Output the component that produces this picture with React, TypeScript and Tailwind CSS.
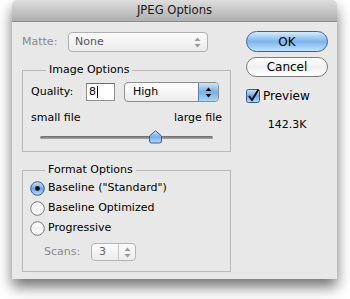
import React from "react";

const font = { fontFamily: '"DejaVu Sans", "Noto Sans", sans-serif' };

function Arrows({ color = "#8a8a8a" }: { color?: string }) {
  return (
    <svg width="7" height="11" viewBox="0 0 7 11">
      <path d="M3.5 0.5 L6.5 4 L0.5 4 Z" fill={color} />
      <path d="M3.5 10.5 L6.5 7 L0.5 7 Z" fill={color} />
    </svg>
  );
}

function Radio({ checked }: { checked?: boolean }) {
  return checked ? (
    <svg width="15" height="15" viewBox="0 0 15 15">
      <defs>
        <linearGradient id="rb" x1="0" y1="0" x2="0" y2="1">
          <stop offset="0" stopColor="#cfe4f8" />
          <stop offset="0.5" stopColor="#6fa7e3" />
          <stop offset="1" stopColor="#b5dcfb" />
        </linearGradient>
      </defs>
      <circle cx="7.5" cy="7.5" r="6.8" fill="url(#rb)" stroke="#3b5b8c" strokeWidth="1" />
      <circle cx="7.5" cy="7.5" r="2.4" fill="#111" />
    </svg>
  ) : (
    <svg width="15" height="15" viewBox="0 0 15 15">
      <defs>
        <linearGradient id="rw" x1="0" y1="0" x2="0" y2="1">
          <stop offset="0" stopColor="#ffffff" />
          <stop offset="0.5" stopColor="#f2f2f2" />
          <stop offset="1" stopColor="#ffffff" />
        </linearGradient>
      </defs>
      <circle cx="7.5" cy="7.5" r="6.8" fill="url(#rw)" stroke="#7a7a7a" strokeWidth="1" />
    </svg>
  );
}

export default function App() {
  return (
    <div className="w-[350px] h-[299px] bg-white pl-[12px] text-[11px] text-black" style={font}>
      <div className="w-[325px] h-[279px] rounded-t-[5px] shadow-[0_8px_14px_rgba(0,0,0,0.55)] flex flex-col overflow-hidden">
        <div className="h-[22px] shrink-0 bg-gradient-to-b from-[#dedede] to-[#afafaf] border-b border-[#8c8c8c] flex items-center justify-center text-[11.6px] text-[#1a1a1a]">
          JPEG Options
        </div>
        <div className="flex-1 bg-[#e8e8e8] flex pl-[10px]">
          {/* left column */}
          <div className="w-[209px] pt-[10px] flex flex-col">
            <div className="h-[20px] flex items-center">
              <span className="w-[46px] text-[#8a8a8a]">Matte:</span>
              <div className="w-[140px] h-[20px] rounded-[4px] border border-[#b0b0b0] bg-gradient-to-b from-[#fbfbfb] to-[#ececec] flex items-center pl-[6px] pr-[6px] justify-between">
                <span className="text-[#555]">None</span>
                <Arrows color="#9a9a9a" />
              </div>
            </div>

            <fieldset className="mt-[11px] border border-[#b9b9b9] pl-[8px] pr-[8px] h-[89px]">
              <legend className="ml-[15px] px-[3px] leading-[14px]">Image Options</legend>
              <div className="mt-[5px] h-[20px] flex items-center">
                <span className="w-[55px]">Quality:</span>
                <div className="w-[29px] h-[18px] bg-white border border-[#8f8f8f] border-t-[#6c6c6c] flex items-center pl-[2px]">
                  <span>8</span>
                  <span className="w-px h-[12px] bg-black ml-[1px]" />
                </div>
                <div className="ml-[9px] w-[95px] h-[20px] rounded-[4px] border border-[#8f8f8f] bg-gradient-to-b from-white to-[#ededed] flex items-center overflow-hidden">
                  <span className="flex-1 pl-[8px]">High</span>
                  <div className="w-[20px] h-full bg-gradient-to-b from-[#cfe4f8] via-[#78b0ea] to-[#a9d6fb] border-l border-[#5f82b5] flex items-center justify-center">
                    <Arrows color="#111" />
                  </div>
                </div>
              </div>
              <div className="mt-[9px] h-[14px] flex items-center justify-between">
                <span>small file</span>
                <span>large file</span>
              </div>
              <div className="mt-[5px] h-[13px] relative mx-[9px]">
                <div className="absolute left-0 right-0 top-[6px] h-[3px] rounded-full bg-gradient-to-b from-[#6a6a6a] to-[#a8a8a8]" />
                <svg className="absolute left-[108px] top-0" width="15" height="14" viewBox="0 0 15 14">
                  <defs>
                    <linearGradient id="th" x1="0" y1="0" x2="0" y2="1">
                      <stop offset="0" stopColor="#d3e7fa" />
                      <stop offset="0.5" stopColor="#74ade8" />
                      <stop offset="1" stopColor="#b3dbfb" />
                    </linearGradient>
                  </defs>
                  <path d="M7.5 0.7 L13.5 6 L13.5 11 Q13.5 13 11.5 13 L3.5 13 Q1.5 13 1.5 11 L1.5 6 Z" fill="url(#th)" stroke="#3d5e90" strokeWidth="1" />
                </svg>
              </div>
            </fieldset>

            <fieldset className="mt-[11px] border border-[#b9b9b9] pl-[7px] h-[109px]">
              <legend className="ml-[15px] px-[3px] leading-[14px]">Format Options</legend>
              <div className="mt-[1px] h-[20px] flex items-center gap-[3px]">
                <Radio checked />
                <span>Baseline ("Standard")</span>
              </div>
              <div className="h-[20px] flex items-center gap-[3px]">
                <Radio />
                <span>Baseline Optimized</span>
              </div>
              <div className="h-[20px] flex items-center gap-[3px]">
                <Radio />
                <span>Progressive</span>
              </div>
              <div className="mt-[5px] h-[18px] flex items-center pl-[14px]">
                <span className="w-[47px] text-[#8a8a8a]">Scans:</span>
                <div className="w-[45px] h-[18px] rounded-[4px] border border-[#b5b5b5] bg-gradient-to-b from-[#fbfbfb] to-[#ececec] flex items-center">
                  <span className="w-[26px] pl-[7px] text-[#666]">3</span>
                  <div className="flex-1 h-full border-l border-[#c8c8c8] flex items-center justify-center">
                    <Arrows color="#9a9a9a" />
                  </div>
                </div>
              </div>
            </fieldset>
          </div>

          {/* right column */}
          <div className="ml-[15px] w-[82px] pt-[9px] flex flex-col items-stretch">
            <div className="h-[21px] rounded-full border border-[#3f6397] bg-gradient-to-b from-[#d8ebfc] via-[#7db5ec] to-[#bfe2fd] flex items-center justify-center text-[12px]">
              OK
            </div>
            <div className="mt-[5px] h-[20px] rounded-full border border-[#7d7d7d] bg-gradient-to-b from-white via-[#f0f0f0] to-white flex items-center justify-center text-[12px]">
              Cancel
            </div>
            <div className="mt-[12px] h-[14px] flex items-center">
              <svg width="14" height="14" viewBox="0 0 14 14">
                <defs>
                  <linearGradient id="cb" x1="0" y1="0" x2="0" y2="1">
                    <stop offset="0" stopColor="#cfe4f8" />
                    <stop offset="0.5" stopColor="#6fa7e3" />
                    <stop offset="1" stopColor="#b5dcfb" />
                  </linearGradient>
                </defs>
                <rect x="0.5" y="0.5" width="13" height="13" rx="2" fill="url(#cb)" stroke="#3b5b8c" />
                <path d="M3 7 L6 11 L12.5 0.5" fill="none" stroke="#111" strokeWidth="2" />
              </svg>
              <span className="ml-[3px] text-[12px]">Preview</span>
            </div>
            <div className="mt-[15px] h-[14px] flex items-center justify-center">142.3K</div>
          </div>
        </div>
      </div>
    </div>
  );
}
